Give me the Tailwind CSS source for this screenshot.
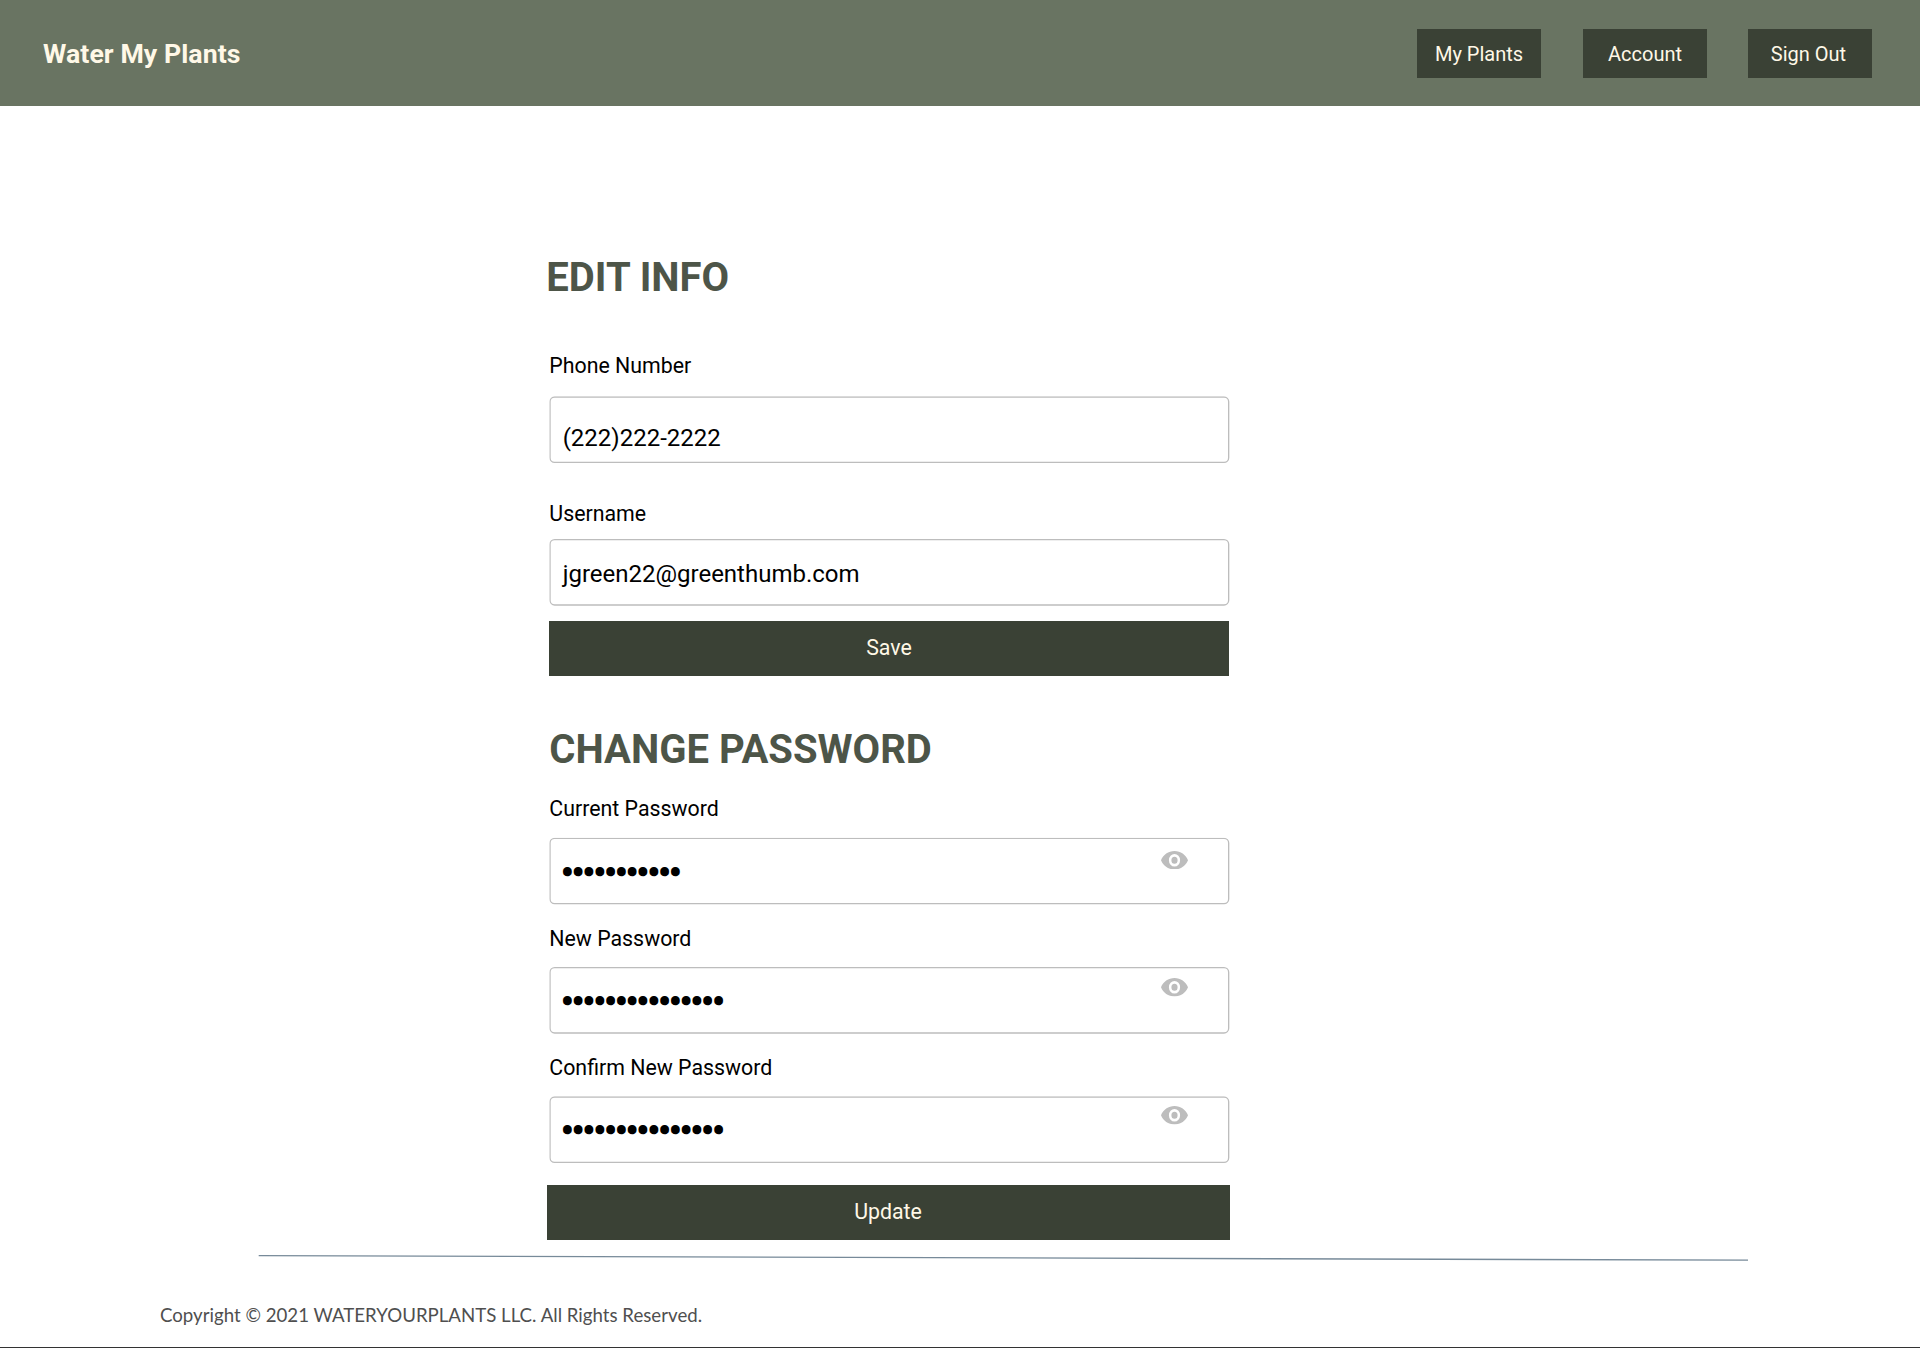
<!DOCTYPE html>
<html lang="en">
<head>
<meta charset="utf-8">
<title>Water My Plants</title>
<script src="https://cdn.jsdelivr.net/npm/@tailwindcss/browser@4"></script>
</head>
<body class="flex h-[1348px] w-[1920px] flex-col overflow-hidden border-b border-[#333333] bg-white font-[Roboto,sans-serif] text-black">
  <svg class="hidden">
    <symbol id="eye" viewBox="0 0 27 18.5">
      <path fill="#bdbdbd" fill-rule="evenodd" d="M13.5 0C7.4 0 2.1 3.8 0 9.25c2.1 5.45 7.4 9.25 13.5 9.25S24.900 14.700 27 9.250C24.900 3.800 19.600 0 13.500 0zM13.500 2.950a5.600 6.300 0 0 1 0 12.600a5.600 6.300 0 0 1 0-12.600zM13.500 5.750a3.100 3.500 0 0 0 0 7a3.100 3.500 0 0 0 0-7z"/>
    </symbol>
    <symbol id="field">
      <rect x="0.67" y="0.67" width="678.67" height="65.33" rx="4.67" fill="none" stroke="#bdbdbd" stroke-width="1.333"/>
    </symbol>
  </svg>

  <header class="flex h-[106px] shrink-0 items-center justify-between bg-[#697462] pl-[43px] pr-12 text-[#fff8e7]">
    <h1 class="pt-0.5 text-[26.67px] leading-8 font-bold tracking-[0.07px]">Water My Plants</h1>
    <nav class="flex gap-[41.5px] text-[20px]">
      <a class="flex h-[49px] w-[124px] items-center justify-center bg-[#3a4135] pt-0.5">My Plants</a>
      <a class="flex h-[49px] w-[124px] items-center justify-center bg-[#3a4135] pt-0.5 pl-px">Account</a>
      <a class="flex h-[49px] w-[124px] items-center justify-center bg-[#3a4135] pt-0.5 pr-[3px]">Sign Out</a>
    </nav>
  </header>

  <main class="ml-[549px] w-[681px] shrink-0 text-[21.33px] leading-6">
    <section class="h-[570px] w-[680px]">
      <h2 class="-ml-[2.67px] pt-[148px] text-[40px] leading-[48px] font-bold text-[#4d5548]">EDIT INFO</h2>
      <div class="h-[94px] pt-[52px] pl-[0.33px]"><label>Phone Number</label></div>
      <div class="relative h-[67px] pt-[28px] pl-[13.67px] text-[24px] leading-7">
        <svg class="absolute top-0 left-0 h-[68px] w-[682px] translate-x-[0.33px] translate-y-[0.33px]"><use href="#field"/></svg>(222)222-2222
      </div>
      <div class="h-[76px] pt-[39px] pl-[0.33px]"><label>Username</label></div>
      <div class="relative h-[67px] pt-[21px] pl-[13.67px] text-[24px] leading-7">
        <svg class="absolute top-0 left-0 h-[68px] w-[682px] translate-x-[0.33px]"><use href="#field"/></svg>jgreen22@greenthumb.com
      </div>
      <button class="mt-[15px] block h-[55px] w-[680px] bg-[#3a4135] pb-0.5 text-[#fff8e7]">Save</button>
    </section>

    <section>
      <h2 class="h-[120px] pt-[50px] pl-[0.33px] text-[40px] leading-[48px] font-bold text-[#4d5548]">CHANGE PASSWORD</h2>
      <div class="h-[41px] pt-px pl-[0.33px]"><label>Current Password</label></div>
      <div class="relative h-[67px] pt-[19px] pl-[13px] text-[32px] leading-8 [-webkit-text-stroke:2.4px_black]">
        <svg class="absolute top-0 left-0 h-[68px] w-[682px] translate-x-[0.33px] translate-y-[0.67px]"><use href="#field"/></svg>•••••••••••
        <svg class="absolute top-[13.5px] left-[612px] h-[18.5px] w-[27px]"><use href="#eye"/></svg>
      </div>
      <div class="h-[63px] pt-[23px] pl-[0.33px]"><label>New Password</label></div>
      <div class="relative h-[67px] pt-[17.5px] pl-[13px] text-[32px] leading-8 [-webkit-text-stroke:2.4px_black]">
        <svg class="absolute top-0 left-0 h-[68px] w-[682px] translate-x-[0.33px]"><use href="#field"/></svg>•••••••••••••••
        <svg class="absolute top-[11px] left-[612px] h-[18.5px] w-[27px]"><use href="#eye"/></svg>
      </div>
      <div class="h-[62px] pt-[22px] pl-[0.33px]"><label>Confirm New Password</label></div>
      <div class="relative h-[67px] pt-[17.5px] pl-[13px] text-[32px] leading-8 [-webkit-text-stroke:2.4px_black]">
        <svg class="absolute top-0 left-0 h-[68px] w-[682px] translate-x-[0.33px] translate-y-[0.33px]"><use href="#field"/></svg>•••••••••••••••
        <svg class="absolute top-[10px] left-[612px] h-[18.5px] w-[27px]"><use href="#eye"/></svg>
      </div>
      <button class="mt-[22px] -ml-0.5 block h-[55px] w-[683px] bg-[#3a4135] pr-px pb-0.5 text-[#fff8e7]">Update</button>
    </section>
  </main>

  <footer class="shrink-0">
    <svg class="mt-[12px] ml-[258px] h-[12px] w-[1492px]"><line x1="0.700" y1="3.600" x2="1490" y2="8.200" stroke="#778a99" stroke-width="1.333"/></svg>
    <p class="mt-[39px] pl-[160px] font-[Lato,sans-serif] text-[18.67px] leading-6 text-[#4f4f4f]">Copyright © 2021 WATERYOURPLANTS LLC. All Rights Reserved.</p>
  </footer>
</body>
</html>
